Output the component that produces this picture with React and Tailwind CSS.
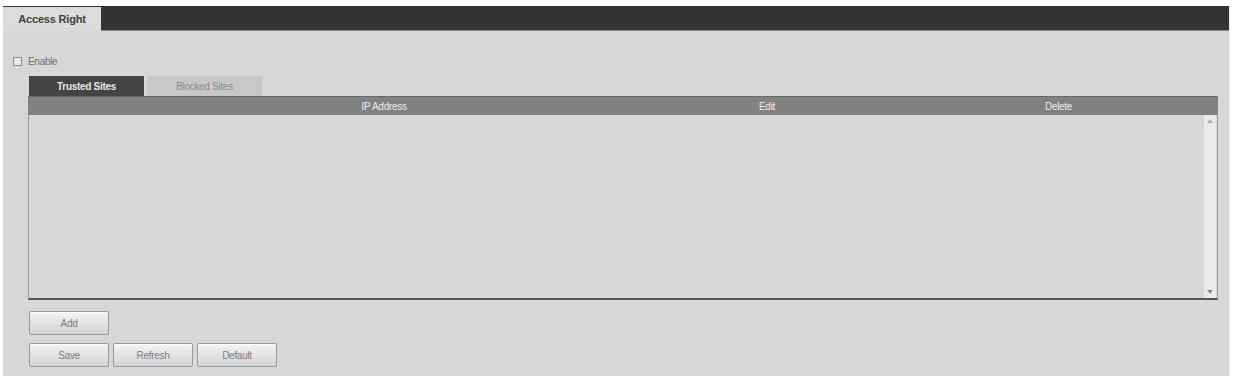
import React from "react";

const font = { fontFamily: '"Liberation Sans", Arial, sans-serif' };

function Btn({ children }) {
  return (
    <button className="w-[80px] h-[24px] rounded-[2px] border border-[#9a9a9a] bg-gradient-to-b from-[#f4f4f4] to-[#d2d2d2] text-[10px] text-[#7e7e7e] tracking-[-0.3px] shadow-[inset_0_1px_0_#fff]">
      {children}
    </button>
  );
}

export default function App() {
  return (
    <div className="w-[1234px] h-[376px] bg-white overflow-hidden" style={font}>
      <div className="pt-[6px] pl-[3px] pr-[4px] h-full">
        <div className="h-full bg-[#d7d7d7] flex flex-col border-r border-[#efefef]">
          {/* top bar */}
          <div className="h-[25px] bg-[#333333] flex items-end border-b border-[#8a8a8a]">
            <div className="w-[98px] h-[24px] bg-[#dcdcdc] flex items-center justify-center text-[11px] font-bold text-[#404040] tracking-[-0.2px] -mb-[1px]">
              Access Right
            </div>
          </div>
          {/* enable */}
          <div className="flex items-center mt-[23px] ml-[10px] gap-[6px]">
            <div className="w-[9px] h-[9px] border border-[#8c8c8c] bg-[#ececec]" />
            <span className="text-[10px] text-[#707070] tracking-[-0.3px]">Enable</span>
          </div>
          {/* tabs */}
          <div className="flex ml-[26px] mt-[7px] gap-[3px]">
            <div className="w-[115px] h-[20px] bg-[#444444] flex items-center justify-center text-[10px] font-bold text-[#e8e8e8] tracking-[-0.3px]">
              Trusted Sites
            </div>
            <div className="w-[115px] h-[20px] bg-[#c8c8c8] flex items-center justify-center text-[10px] text-[#8a8a8a] tracking-[-0.3px]">
              Blocked Sites
            </div>
          </div>
          {/* table */}
          <div className="ml-[25px] w-[1190px] flex flex-col">
            <div className="h-[19px] bg-[#818181] grid grid-cols-[712px_1fr_1fr] items-center text-[10px] text-[#eeeeee] tracking-[-0.3px] border-t border-[#6a6a6a]">
              <span className="text-center">IP Address</span>
              <span className="text-left pl-[19px]">Edit</span>
              <span className="text-left pl-[66px]">Delete</span>
            </div>
            <div className="h-[185px] border-l border-[#9a9a9a] border-b-2 border-b-[#555555] border-r border-r-[#9a9a9a] flex justify-end">
              <div className="w-[12px] h-full bg-[#ebebeb] mr-[1px] flex flex-col justify-between items-center py-[4px]">
                <svg width="6" height="4" viewBox="0 0 6 4"><path d="M0 4 L3 0 L6 4 Z" fill="#aaaaaa" /></svg>
                <svg width="6" height="4" viewBox="0 0 6 4"><path d="M0 0 L3 4 L6 0 Z" fill="#888888" /></svg>
              </div>
            </div>
          </div>
          {/* buttons */}
          <div className="ml-[26px] mt-[11px] flex flex-col gap-[8px]">
            <div className="flex">
              <Btn>Add</Btn>
            </div>
            <div className="flex gap-[4px]">
              <Btn>Save</Btn>
              <Btn>Refresh</Btn>
              <Btn>Default</Btn>
            </div>
          </div>
        </div>
      </div>
    </div>
  );
}
